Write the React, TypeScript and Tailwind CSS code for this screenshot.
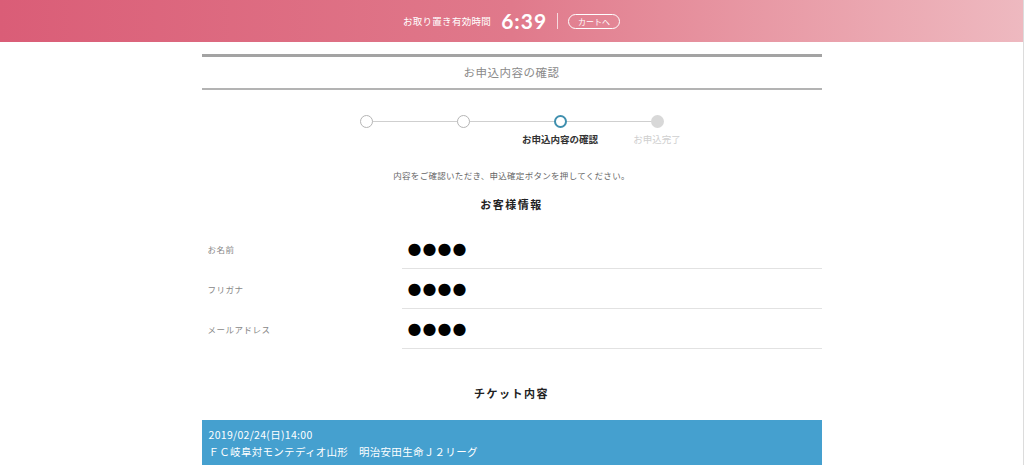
const jp = "font-['Noto_Sans_CJK_JP',sans-serif]";

const customerRows = [
  { label: "お名前", value: "●●●●" },
  { label: "フリガナ", value: "●●●●" },
  { label: "メールアドレス", value: "●●●●" },
];

const steps = [
  { label: "", state: "done" },
  { label: "", state: "done" },
  { label: "お申込内容の確認", state: "current" },
  { label: "お申込完了", state: "todo" },
];

function Stepper() {
  return (
    <div className="flex justify-center pt-[25px]">
      {steps.map((step, i) => (
        <div key={i} className="relative flex w-[97px] flex-col items-center">
          {i < steps.length - 1 ? <div className="absolute left-[48px] top-[6px] h-px w-[97px] bg-[#cfcfcf]" /> : null}
          <div
            className={`relative z-10 h-[13px] w-[13px] rounded-full ${
              step.state === "current"
                ? "border-2 border-[#3f8fae] bg-white"
                : step.state === "todo"
                  ? "bg-[#d8d8d8]"
                  : "border-[1.5px] border-[#b5b5b5] bg-white"
            }`}
          />
          <div
            className={`mt-[4px] h-[14px] whitespace-nowrap text-[9.5px] leading-[14px] ${
              step.state === "current" ? "font-bold text-[#333]" : "text-[#cfcfcf]"
            }`}
          >
            {step.label}
          </div>
        </div>
      ))}
    </div>
  );
}

export default function App() {
  return (
    <div className={`h-[465px] overflow-hidden border-r border-[#dcdcdc] bg-white ${jp}`}>
      <header className="flex h-[42px] items-center justify-center bg-gradient-to-r from-[#da5d77] via-[#e0798b] to-[#eeb9c0] text-white">
        <span className="text-[9.5px] tracking-[0.3px]">お取り置き有効時間</span>
        <span className="ml-[10px] font-['Lato',sans-serif] text-[21px] font-bold tracking-[1px]">6:39</span>
        <span className="mx-[10px] h-[16px] w-px bg-white/70" />
        <button type="button" className="h-[15px] rounded-full border border-white px-[9px] text-[8px] leading-[13px]">
          カートへ
        </button>
      </header>

      <main className="mx-auto w-[620px]">
        <div className="mt-[12px] h-[3px] bg-[#a3a3a3]" />
        <h1 className="flex h-[31px] items-center justify-center text-[11.5px] tracking-[0.5px] text-[#8a8a8a]">お申込内容の確認</h1>
        <div className="h-[2px] bg-[#b3b3b3]" />

        <Stepper />

        <p className="mt-[23px] text-center text-[8.5px] tracking-[0.3px] text-[#666]">内容をご確認いただき、申込確定ボタンを押してください。</p>
        <h2 className="mt-[14px] text-center text-[11px] font-bold tracking-[1.5px] text-[#222]">お客様情報</h2>

        <dl className="mt-[17px]">
          {customerRows.map((row) => (
            <div key={row.label} className="flex h-[40px]">
              <dt className="flex w-[200px] items-center pl-[6px] text-[8.5px] tracking-[0.5px] text-[#888]">{row.label}</dt>
              <dd className="flex flex-1 items-center border-b border-[#e2e2e2] pl-[6px] font-['DejaVu_Sans',sans-serif] text-[16px] leading-none tracking-[1px] text-black">
                {row.value}
              </dd>
            </div>
          ))}
        </dl>

        <h2 className="mt-[36px] text-center text-[11px] font-bold tracking-[1.5px] text-[#222]">チケット内容</h2>

        <section className="mt-[18px] h-[60px] bg-[#45a0cf] px-[7px] pt-[6px] text-[10.5px] leading-[17px] tracking-[0.3px] text-white">
          <div>2019/02/24(日)14:00</div>
          <div>ＦＣ岐阜対モンテディオ山形　明治安田生命Ｊ２リーグ</div>
        </section>
      </main>
    </div>
  );
}
